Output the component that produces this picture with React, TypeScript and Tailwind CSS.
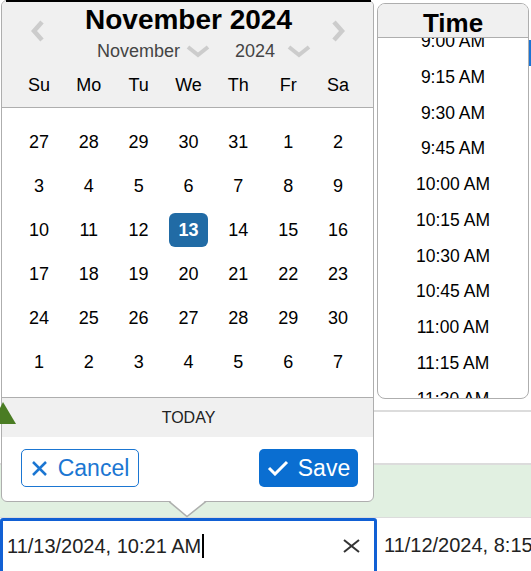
import React from "react";

const rows: number[][] = [
  [27, 28, 29, 30, 31, 1, 2],
  [3, 4, 5, 6, 7, 8, 9],
  [10, 11, 12, 13, 14, 15, 16],
  [17, 18, 19, 20, 21, 22, 23],
  [24, 25, 26, 27, 28, 29, 30],
  [1, 2, 3, 4, 5, 6, 7],
];

const dayNames = ["Su", "Mo", "Tu", "We", "Th", "Fr", "Sa"];

const times = [
  "9:00 AM",
  "9:15 AM",
  "9:30 AM",
  "9:45 AM",
  "10:00 AM",
  "10:15 AM",
  "10:30 AM",
  "10:45 AM",
  "11:00 AM",
  "11:15 AM",
  "11:30 AM",
  "11:45 AM",
];

function DownChev({ className }: { className?: string }) {
  return (
    <svg className={className} width="24" height="13" viewBox="0 0 24 13">
      <polyline points="2,2 12,10 22,2" fill="none" stroke="#cccccc" strokeWidth="4" />
    </svg>
  );
}

export default function App() {
  return (
    <div className="relative w-[531px] h-[571px] overflow-hidden bg-white font-['Liberation_Sans',Arial,sans-serif] text-black">
      {/* page behind the popup */}
      <div className="flex flex-col">
        <div className="h-[410px]" />
        <div className="h-[2px] bg-[#dcdcdc]" />
        <div className="h-[51px]" />
        <div className="h-[2px] bg-[#dcdcdc]" />
        <div className="h-[52px] bg-[#e1f0e1]" />
        <div className="h-[1px] bg-[#dcdcdc]" />
        <div className="flex items-center">
          <div className="w-[377px] h-[56px] shrink-0 border-[3px] border-[#1160d4] rounded-[3px] flex items-center pl-[4px] pr-[14px]">
            <span className="text-[20px] text-[#222] whitespace-nowrap">11/13/2024, 10:21 AM</span>
            <span className="w-[1.5px] h-[24px] bg-black ml-[1px]" />
            <div className="flex-1" />
            <svg width="17" height="14" viewBox="0 0 17 14">
              <line x1="1" y1="1" x2="16" y2="13" stroke="#333" strokeWidth="2" />
              <line x1="16" y1="1" x2="1" y2="13" stroke="#333" strokeWidth="2" />
            </svg>
          </div>
          <span className="ml-[7px] mt-[-3px] text-[20px] text-[#222] whitespace-nowrap">
            11/12/2024, 8:15 AM
          </span>
        </div>
      </div>

      {/* calendar popup */}
      <div className="absolute left-[1px] top-0 w-[373px] border border-[#aeaeae] rounded-[6px] bg-white overflow-hidden">
        <div className="relative bg-[#f0f0f0] border-b border-[#aeaeae] pt-[3px] pb-[12px]">
          <div className="ml-[12px] w-[349px] flex flex-col">
            <div className="h-[32px] leading-[32px] text-[28px] font-bold text-center whitespace-nowrap">
              November 2024
            </div>
            <div className="mt-[5px] h-[20px] flex items-center text-[18px] leading-[20px] text-[#444] pl-[83px]">
              <span>November</span>
              <DownChev className="ml-[6px]" />
              <span className="ml-[25px]">2024</span>
              <DownChev className="ml-[12px]" />
            </div>
            <div className="mt-[14px] grid grid-cols-7 h-[20px] text-[18px] leading-[20px] text-center">
              {dayNames.map((d) => (
                <div key={d}>{d}</div>
              ))}
            </div>
          </div>
          <svg className="absolute left-[28px] top-[18px]" width="16" height="24" viewBox="0 0 16 24">
            <polyline points="12,3 4,12 12,21" fill="none" stroke="#cccccc" strokeWidth="4.5" />
          </svg>
          <svg className="absolute left-[328px] top-[18px]" width="16" height="24" viewBox="0 0 16 24">
            <polyline points="4,3 12,12 4,21" fill="none" stroke="#cccccc" strokeWidth="4.5" />
          </svg>
        </div>

        <div className="pt-[12px] pb-[13px]">
          <div className="ml-[12px] w-[349px] grid grid-cols-7">
            {rows.map((r, ri) =>
              r.map((d, di) => (
                <div key={`${ri}-${di}`} className="h-[44px] flex items-center justify-center text-[18px]">
                  {ri === 2 && d === 13 ? (
                    <span className="w-[39px] h-[34px] rounded-[6px] bg-[#216ba5] text-white font-bold flex items-center justify-center">
                      {d}
                    </span>
                  ) : (
                    <span>{d}</span>
                  )}
                </div>
              ))
            )}
          </div>
        </div>

        <div className="border-t border-[#aeaeae] bg-[#f0f0f0] h-[40px] flex items-center">
          <div className="ml-[12px] w-[349px] text-center text-[16px] text-[#222]">TODAY</div>
        </div>

        <div className="pt-[12px] pb-[14px] pl-[19px] pr-[15px] flex justify-between">
          <button className="w-[118px] h-[38px] border-[1.5px] border-[#1b76d2] rounded-[5px] text-[#1b76d2] text-[23px] flex items-center justify-center gap-[10px] bg-white">
            <svg width="17" height="17" viewBox="0 0 17 17">
              <line x1="2" y1="2" x2="15" y2="15" stroke="#1b76d2" strokeWidth="2.5" />
              <line x1="15" y1="2" x2="2" y2="15" stroke="#1b76d2" strokeWidth="2.5" />
            </svg>
            <span>Cancel</span>
          </button>
          <button className="w-[99px] h-[38px] bg-[#0a6ed1] rounded-[5px] text-white text-[23px] flex items-center justify-center gap-[9px]">
            <svg width="22" height="16" viewBox="0 0 22 16">
              <polyline points="2,8 8,14 20,2" fill="none" stroke="#ffffff" strokeWidth="3" />
            </svg>
            <span>Save</span>
          </button>
        </div>
      </div>

      {/* popup arrow notch */}
      <svg className="absolute left-[169px] top-[500px]" width="38" height="18" viewBox="0 0 38 18">
        <polygon points="0,0 18,16.5 37,0" fill="#ffffff" />
        <polyline points="0,1.5 18,16.5 37,1.5" fill="none" stroke="#aeaeae" strokeWidth="1.5" />
      </svg>

      {/* time list */}
      <div className="absolute left-[377px] top-[3px] w-[152px] h-[396px] border border-[#aeaeae] rounded-[8px] bg-white overflow-hidden flex flex-col">
        <div className="h-[34px] shrink-0 bg-[#f0f0f0] border-b border-[#aeaeae] text-center text-[26px] font-bold leading-[26px] pt-[6px]">
          Time
        </div>
        <div className="flex-1 overflow-hidden">
          <div className="mt-[-14.6px]">
            {times.map((t) => (
              <div key={t} className="h-[35.75px] flex items-center justify-center text-[17.5px] whitespace-nowrap">
                {t}
              </div>
            ))}
          </div>
        </div>
      </div>

      {/* overlays from the page behind */}
      <div className="absolute left-[6px] top-0 w-[365px] h-[2px] bg-black" />
      <div className="absolute left-[529px] top-[40px] w-[2px] h-[26px] bg-[#1a73d4]" />
      <svg className="absolute left-0 top-[400px]" width="17" height="26" viewBox="0 0 17 26">
        <polygon points="3,2 16,24 0,24 0,8" fill="#4a7c23" />
      </svg>
    </div>
  );
}
